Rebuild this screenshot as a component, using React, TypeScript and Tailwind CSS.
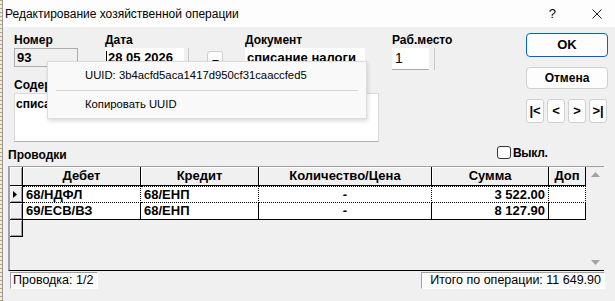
import React from "react";

const colHead =
  "flex h-full items-center justify-center border-r border-black bg-[#f0f0f0] shadow-[inset_1px_1px_0_#ffffff]";
const indicator =
  "h-[17px] w-[13px] shrink-0 border-r border-b border-black bg-[#f0f0f0] shadow-[inset_1px_1px_0_#ffffff,inset_-1px_-1px_0_#a0a0a0]";

function Field({
  label,
  width,
  children,
  className,
}: {
  label: string;
  width: string;
  children: React.ReactNode;
  className?: string;
}) {
  return (
    <div className={`flex shrink-0 flex-col ${width}`}>
      <div className="h-[15px] text-[12px] font-bold leading-[15px]">{label}</div>
      <div className={className}>{children}</div>
    </div>
  );
}

function GridRow({
  debit,
  credit,
  sum,
  current,
}: {
  debit: string;
  credit: string;
  sum: string;
  current?: boolean;
}) {
  const cell = `h-full shrink-0 border-r border-black bg-white px-[3px] leading-[16px] ${
    current ? "border-y border-dotted border-y-black" : "border-b border-b-black"
  }`;
  return (
    <div className="flex h-[17px] text-[13px] font-bold">
      <div className={`${indicator} relative`}>
        {current && (
          <svg className="absolute left-[3px] top-[5px]" width="4" height="7" viewBox="0 0 4 7">
            <path d="M0 0 L4 3.5 L0 7 Z" fill="#000" />
          </svg>
        )}
      </div>
      <div className={`${cell} w-[118px]`}>{debit}</div>
      <div className={`${cell} w-[118px]`}>{credit}</div>
      <div className={`${cell} w-[173px] text-center`}>-</div>
      <div className={`${cell} w-[117px] text-right`}>{sum}</div>
      <div className={`${cell} w-[37px]`} />
    </div>
  );
}

export default function App() {
  return (
    <div className="relative flex h-[301px] w-[615px] overflow-hidden bg-[#f0f0f0] font-['Liberation_Sans',Arial,sans-serif] text-black">
      {/* window edge */}
      <div className="w-[3px] shrink-0 border-r border-[#9a9a9a] bg-[repeating-linear-gradient(to_bottom,#c9a15c_0px,#c9a15c_1px,#ecebe8_1px,#ecebe8_4px)]" />

      <div className="flex flex-1 flex-col">
        {/* Title bar */}
        <div className="flex h-[27px] shrink-0 items-center bg-[#fdfdfd] pl-[2px]">
          <span className="text-[12px]">Редактирование хозяйственной операции</span>
          <span className="ml-auto text-[13px]">?</span>
          <svg className="ml-[36px] mr-[13px]" width="10" height="10" viewBox="0 0 10 10">
            <path d="M0.5 0.5 L9.5 9.5 M9.5 0.5 L0.5 9.5" stroke="#222" strokeWidth="1" />
          </svg>
        </div>

        {/* Top section */}
        <div className="flex h-[118px] shrink-0">
          <div className="flex w-[523px] flex-col pl-[11px] pt-[6px]">
            <div className="flex h-[37px] items-start">
              <Field
                label="Номер"
                width="w-[64px]"
                className="h-[19px] border border-[#adadad] bg-[#f0f0f0] pl-[2px] text-[13px] font-bold leading-[17px]"
              >
                93
              </Field>
              <Field
                label="Дата"
                width="ml-[27px] w-[79px]"
                className="flex h-[19px] items-center overflow-hidden bg-white pl-[1px] text-[13px] font-bold"
              >
                <span className="mr-[1px] h-[13px] w-px bg-black" />
                <span className="leading-[17px]">28 05 2026</span>
              </Field>
              <div className="ml-[4px] mt-[15px] h-[22px] w-px shrink-0 bg-[#c6c6c6]" />
              <div className="ml-[18px] mt-[18px] flex h-[16px] w-[16px] shrink-0 items-end justify-center rounded-[3px] border border-[#cfcfcf] bg-[#fdfdfd] pb-[2px]">
                <svg width="7" height="4" viewBox="0 0 7 4">
                  <path d="M0 0 L7 0 L3.5 4 Z" fill="#000" />
                </svg>
              </div>
              <Field
                label="Документ"
                width="ml-[22px] w-[120px]"
                className="h-[19px] overflow-hidden whitespace-nowrap bg-white pl-[2px] text-[13px] font-bold leading-[19px]"
              >
                списание налоги
              </Field>
              <Field
                label="Раб.место"
                width="ml-[27px] w-[37px]"
                className="h-[22px] border-b border-[#a8a8a8] bg-white pl-[3px] text-[14px] leading-[20px]"
              >
                1
              </Field>
              <div className="ml-[5px] mt-[15px] h-[22px] w-px shrink-0 bg-[#c6c6c6]" />
            </div>
            <div className="mt-[8px] h-[15px] text-[12px] font-bold leading-[15px]">Содержание</div>
            <div className="h-[49px] w-[365px] border border-[#dadada] border-b-[#b0b0b0] bg-white pl-[1px] pt-[3px] text-[12px] font-bold leading-[14px]">
              списание налоги
            </div>
          </div>

          <div className="flex w-[82px] flex-col pt-[6px]">
            <div className="flex h-[24px] items-center justify-center rounded-[4px] border border-[#0067c0] bg-[#fdfdfd] text-[13px] font-bold">
              OK
            </div>
            <div className="mt-[10px] flex h-[22px] items-center justify-center rounded-[4px] border border-[#d0d0d0] bg-[#fdfdfd] text-[12px] font-bold">
              Отмена
            </div>
            <div className="mt-[10px] flex gap-[3px]">
              {["|<", "<", ">", ">|"].map((t) => (
                <div
                  key={t}
                  className="flex h-[24px] w-[18px] items-center justify-center rounded-[3px] border border-[#d0d0d0] bg-[#fdfdfd] text-[13px] font-bold"
                >
                  {t}
                </div>
              ))}
            </div>
          </div>
        </div>

        {/* Postings caption */}
        <div className="flex h-[21px] shrink-0 pl-[5px]">
          <div className="mt-[3px] w-[489px] text-[12px] font-bold leading-[14px]">Проводки</div>
          <div className="mt-[1px] flex h-[13px] items-center">
            <div className="h-[13px] w-[14px] rounded-[3px] border border-[#333] bg-white" />
            <span className="ml-[2px] text-[12px] font-bold tracking-[-0.3px]">Выкл.</span>
          </div>
        </div>

        {/* Grid */}
        <div className="ml-[5px] flex h-[105px] w-[596px] shrink-0 border-t border-l-2 border-b border-t-[#a0a0a0] border-l-[#a0a0a0] border-b-black">
          <div className="flex w-[576px] flex-col">
            <div className="flex h-[19px] border-b border-black text-[13px] font-bold">
              <div className="h-full w-[13px] shrink-0 border-r border-black bg-[#f0f0f0] shadow-[inset_1px_1px_0_#ffffff,inset_-1px_0_0_#a0a0a0]" />
              <div className={`${colHead} w-[118px]`}>Дебет</div>
              <div className={`${colHead} w-[118px]`}>Кредит</div>
              <div className={`${colHead} w-[173px]`}>Количество/Цена</div>
              <div className={`${colHead} w-[117px]`}>Сумма</div>
              <div className={`${colHead} w-[37px]`}>Доп</div>
            </div>
            <GridRow debit="68/НДФЛ" credit="68/ЕНП" sum="3 522.00" current />
            <GridRow debit="69/ЕСВ/ВЗ" credit="68/ЕНП" sum="8 127.90" />
            <div className={indicator} />
          </div>
          <div className="flex w-[18px] flex-col items-center justify-between py-[5px]">
            <svg width="9" height="5" viewBox="0 0 9 5">
              <path d="M0 5 L4.5 0 L9 5 Z" fill="#a3a3a3" />
            </svg>
            <svg width="9" height="5" viewBox="0 0 9 5">
              <path d="M0 0 L9 0 L4.5 5 Z" fill="#a3a3a3" />
            </svg>
          </div>
        </div>

        {/* Status bar */}
        <div className="mt-[1px] flex h-[17px] shrink-0 pl-[7px] pr-[10px] text-[12.5px]">
          <div className="w-[88px] border border-[#a0a0a0] border-r-white border-b-white bg-[#fbfbfb] pl-[2px] leading-[15px]">
            Проводка: 1/2
          </div>
          <div className="ml-auto w-[184px] border border-[#a0a0a0] border-r-white border-b-white bg-[#fbfbfb] pr-[3px] text-right leading-[15px]">
            Итого по операции: 11 649.90
          </div>
        </div>
      </div>

      {/* Context menu */}
      <div className="absolute left-[47px] top-[61px] flex h-[58px] w-[320px] flex-col border border-[#dcdcdc] bg-[#f9f9f9] shadow-[1px_2px_4px_rgba(0,0,0,0.15)]">
        <div className="flex h-[28px] items-center pl-[37px] text-[11.3px]">
          UUID: 3b4acfd5aca1417d950cf31caaccfed5
        </div>
        <div className="mx-[8px] h-px bg-[#d6d6d6]" />
        <div className="flex h-[28px] items-center pl-[37px] text-[11.3px]">Копировать UUID</div>
      </div>
    </div>
  );
}
